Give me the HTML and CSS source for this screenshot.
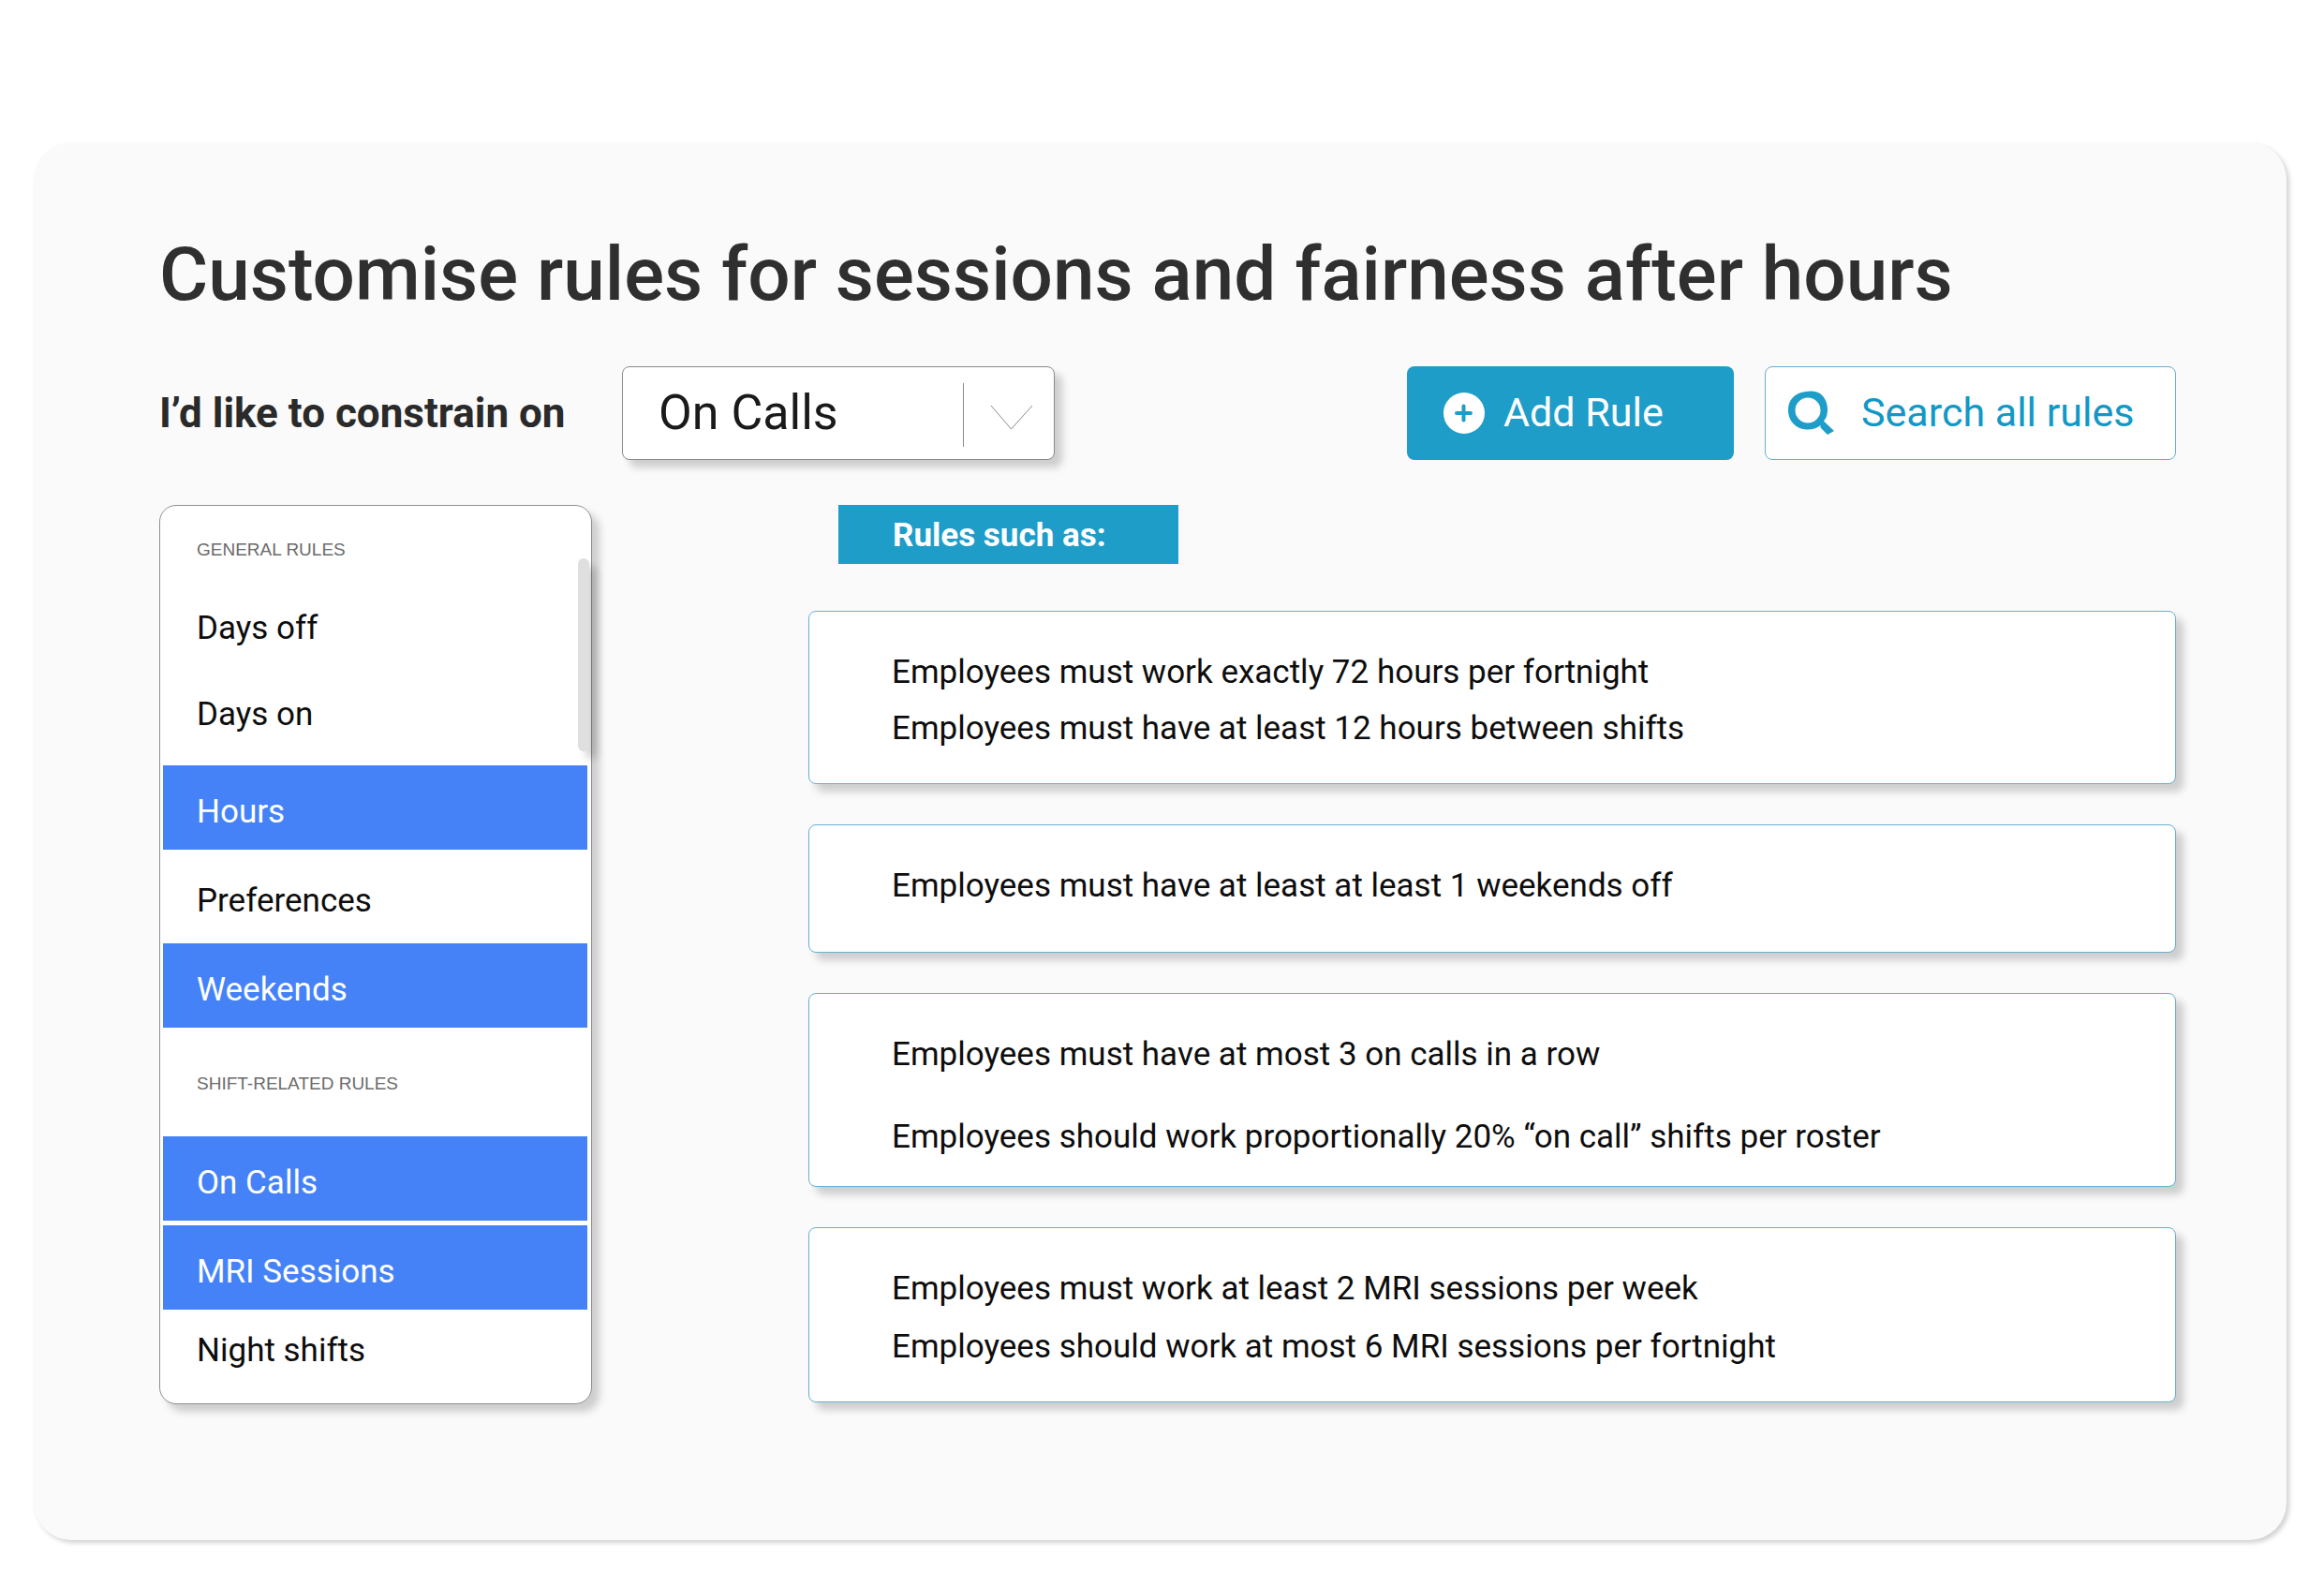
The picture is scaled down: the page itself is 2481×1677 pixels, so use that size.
FILE: index.html
```html
<!DOCTYPE html>
<html lang="en">
<head>
<meta charset="utf-8">
<meta name="viewport" content="width=device-width, initial-scale=1">
<title>Customise rules</title>
<link rel="stylesheet" href="styles.css">
</head>
<body>
<main class="panel">
  <h1 class="title">Customise rules for sessions and fairness after hours</h1>

  <div class="toolbar">
    <label class="toolbar-label" for="constraint">I’d like to constrain on</label>
    <div class="select">
      <select id="constraint" class="select-field">
        <option>On Calls</option>
        <option>Hours</option>
        <option>Weekends</option>
        <option>MRI Sessions</option>
      </select>
      <svg class="select-arrow" width="76" height="68" viewBox="0 0 76 68" fill="none" stroke="#8a8a8a" aria-hidden="true">
        <path d="M1.5 0V68"/>
        <path d="M31 24L52.500 49L75 24"/>
      </svg>
    </div>
    <button class="add" type="button">
      <svg width="44" height="44" viewBox="0 0 44 44" aria-hidden="true">
        <circle cx="22" cy="22" r="22" fill="#fff"/>
        <path d="M21.500 14.500V29.500M14 22H29" stroke="#1e9dc9" stroke-width="4" stroke-linecap="round"/>
      </svg>
      <span class="add-text">Add Rule</span>
    </button>
    <div class="search">
      <svg width="50" height="48" viewBox="0 0 50 48" aria-hidden="true">
        <path fill="#1e9dc9" fill-rule="evenodd" d="M24 .5C35 0 42 9 42 20C42 25 41 29 38 32.500L39 33.500L49 43L42 47L34.500 39.500V37C31 40 26 41.500 21 41.500C9 41.500 0 33 0 21C0 8 9 1 24 .5ZM21 7.500A13.500 13.500 0 1 0 21 34.500A13.500 13.500 0 1 0 21 7.500Z"/>
      </svg>
      <input class="search-field" type="search" placeholder="Search all rules" aria-label="Search all rules">
    </div>
  </div>

  <div class="content">
    <nav class="filters" aria-label="Rule types">
      <h2 class="filters-heading">GENERAL RULES</h2>
      <ul class="options options-short">
        <li><button class="option" type="button">Days off</button></li>
        <li><button class="option" type="button">Days on</button></li>
      </ul>
      <ul class="options">
        <li><button class="option" type="button" aria-pressed="true">Hours</button></li>
        <li><button class="option" type="button">Preferences</button></li>
        <li><button class="option" type="button" aria-pressed="true">Weekends</button></li>
      </ul>
      <h2 class="filters-heading filters-heading-inner">SHIFT-RELATED RULES</h2>
      <ul class="options">
        <li><button class="option" type="button" aria-pressed="true">On Calls</button></li>
        <li><button class="option" type="button" aria-pressed="true">MRI Sessions</button></li>
        <li><button class="option option-last" type="button">Night shifts</button></li>
      </ul>
      <span class="scroll-thumb"></span>
    </nav>

    <section class="rules">
      <h2 class="rules-tag">Rules such as:</h2>
      <div class="rule-list">
        <article class="rule">
          <p>Employees must work exactly 72 hours per fortnight</p>
          <p>Employees must have at least 12 hours between shifts</p>
        </article>
        <article class="rule rule-single">
          <p>Employees must have at least at least 1 weekends off</p>
        </article>
        <article class="rule rule-spaced">
          <p>Employees must have at most 3 on calls in a row</p>
          <p>Employees should work proportionally 20% “on call” shifts per roster</p>
        </article>
        <article class="rule rule-pair">
          <p>Employees must work at least 2 MRI sessions per week</p>
          <p>Employees should work at most 6 MRI sessions per fortnight</p>
        </article>
      </div>
    </section>
  </div>
</main>
</body>
</html>
```
FILE: styles.css
```css
* {
  box-sizing: border-box;
}

body {
  margin: 0;
  padding: 152px 40px 34px 36px;
  background: #fff;
  color: #1a1a1a;
  font-family: Roboto, "Liberation Sans", sans-serif;
}

h1, h2, p, ul {
  margin: 0;
  padding: 0;
}

button, input, select {
  font: inherit;
}

.panel {
  padding: 93px 118px 145px 134px;
  border-radius: 40px;
  background: #fafafa;
  box-shadow: 3px 3px 5px rgba(0, 0, 0, .18);
}

.title {
  color: #2f2f2f;
  font-size: 80px;
  font-weight: 500;
  line-height: 96px;
}

.toolbar {
  display: flex;
  align-items: center;
  margin-top: 50px;
}

.toolbar-label {
  width: 494px;
  color: #2a2a2a;
  font-size: 44px;
  font-weight: 700;
}

.select {
  position: relative;
  width: 462px;
}

.select-field {
  display: block;
  width: 100%;
  height: 100px;
  padding: 0 110px 2px 38px;
  border: 1px solid #8a8a8a;
  border-radius: 8px;
  background: #fff;
  box-shadow: 8px 8px 8px rgba(0, 0, 0, .18);
  color: #1a1a1a;
  font-size: 52px;
  appearance: none;
}

.select-arrow {
  position: absolute;
  top: 18px;
  right: 23px;
  pointer-events: none;
}

.add {
  display: flex;
  align-items: center;
  gap: 20px;
  width: 349px;
  height: 100px;
  margin-left: auto;
  padding: 0 39px;
  border: 0;
  border-radius: 8px;
  background: #1e9dc9;
  color: #fff;
  font-size: 43px;
}

.add-text {
  padding-bottom: 2px;
}

.search {
  display: flex;
  align-items: center;
  gap: 28px;
  width: 439px;
  height: 100px;
  margin-left: 33px;
  padding: 0 8px 0 24px;
  border: 1px solid #67afd0;
  border-radius: 8px;
  background: #fff;
}

.search svg {
  flex: none;
}

.search-field {
  flex: 1;
  min-width: 0;
  padding: 0 0 2px;
  border: 0;
  background: none;
  color: #1198c6;
  font-size: 43px;
  appearance: none;
}

.search-field::placeholder {
  color: #1198c6;
  opacity: 1;
}

.content {
  display: grid;
  grid-template-columns: 462px 1fr;
  gap: 231px;
  margin-top: 48px;
}

.filters {
  position: relative;
  padding: 35px 4px 27px 3px;
  border: 1px solid #8f8f8f;
  border-radius: 18px;
  background: #fff;
  box-shadow: 8px 8px 8px rgba(0, 0, 0, .18);
}

.filters-heading {
  padding-left: 36px;
  color: #6b6b6b;
  font-family: "Liberation Sans", Arial, sans-serif;
  font-size: 19px;
  font-weight: 400;
  line-height: 24px;
}

.filters-heading-inner {
  padding-top: 48px;
  padding-bottom: 44px;
}

.options {
  display: flex;
  flex-direction: column;
  gap: 5px;
  list-style: none;
}

.options-short {
  gap: 2px;
  padding-top: 22px;
  padding-bottom: 14px;
}

.option {
  display: block;
  width: 100%;
  height: 90px;
  padding: 8px 36px 0;
  border: 0;
  background: none;
  color: #0d0d0d;
  font-size: 35px;
  text-align: left;
}

.option[aria-pressed="true"] {
  background: #4582f7;
  color: #fff;
}

.option-last {
  height: 68px;
}

.scroll-thumb {
  position: absolute;
  top: 56px;
  right: 2px;
  width: 12px;
  height: 206px;
  border-radius: 6px;
  background: #dfdfdf;
  box-shadow: 8px 8px 8px rgba(0, 0, 0, .18);
}

.rules-tag {
  width: 363px;
  margin-left: 32px;
  padding: 3px 0 0 58px;
  background: #1e9dc9;
  color: #fff;
  font-size: 35px;
  font-weight: 700;
  line-height: 60px;
}

.rule-list {
  display: grid;
  gap: 43px;
  margin-top: 50px;
}

.rule {
  padding: 35px 88px 28px;
  border: 1px solid #67afd0;
  border-radius: 8px;
  background: #fff;
  box-shadow: 8px 8px 8px rgba(0, 0, 0, .18);
  color: #0d0d0d;
  font-size: 35px;
  line-height: 60px;
}

.rule-single {
  padding-bottom: 40px;
}

.rule-spaced {
  display: grid;
  gap: 28px;
  padding-bottom: 22px;
}

.rule-pair {
  display: grid;
  gap: 2px;
}
```
